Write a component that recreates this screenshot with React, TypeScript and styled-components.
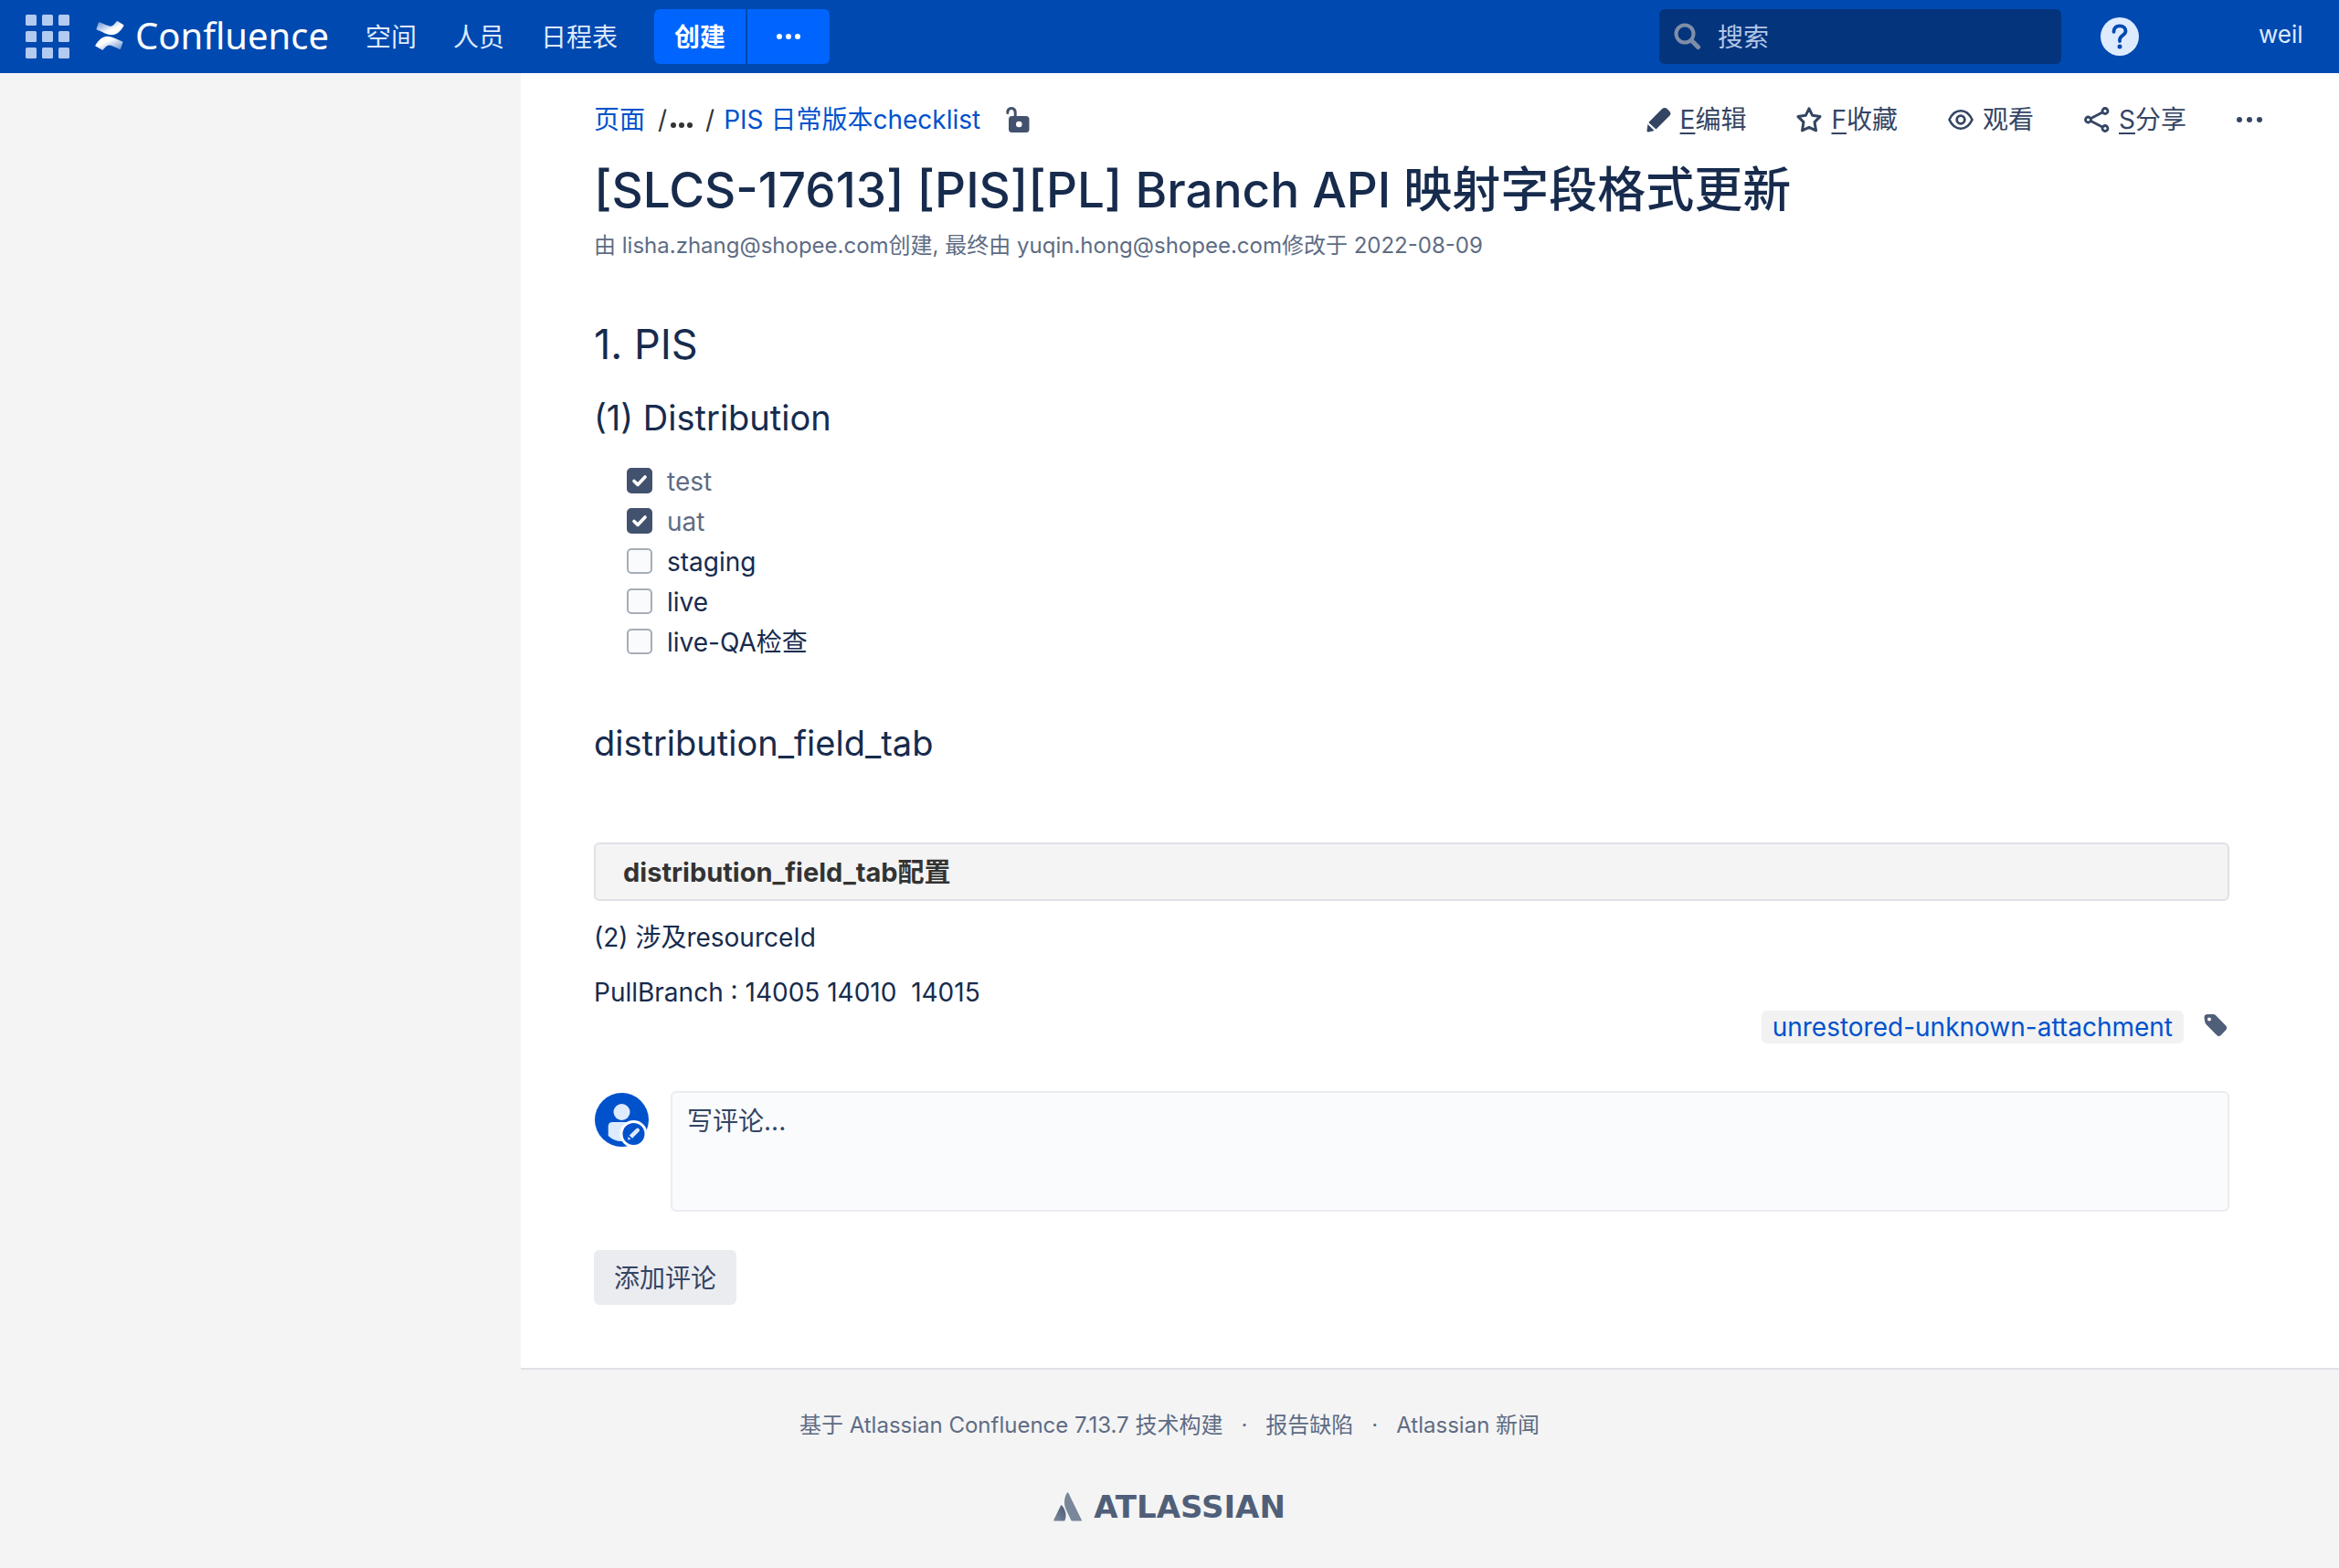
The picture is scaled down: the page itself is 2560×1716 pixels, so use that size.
import React from "react";
import styled, { createGlobalStyle } from "styled-components";

const GlobalStyle = createGlobalStyle`
  *, *::before, *::after { box-sizing: border-box; }
  body {
    margin: 0;
    background: #f4f4f4;
    color: #172b4d;
    font-family: Inter, "Noto Sans CJK SC", sans-serif;
    font-size: 28px;
    line-height: 40px;
  }
  button, input, textarea { font: inherit; color: inherit; }
  h1, h2, h3, p, ul { margin: 0; padding: 0; font-weight: 400; }
  ul { list-style: none; }
  a { color: inherit; text-decoration: none; }
  svg { display: block; flex: none; }
`;

const TopBar = styled.header`
  display: flex;
  align-items: center;
  height: 80px;
  padding: 0 40px 0 28px;
  background: #0049b0;
  color: #deebff;
`;

const PlainButton = styled.button`
  display: flex;
  align-items: center;
  padding: 0;
  border: 0;
  background: none;
  cursor: pointer;
`;

const Brand = styled.a`
  display: flex;
  align-items: center;
  gap: 11px;
  margin: 0 36px 0 28px;
  padding-bottom: 2px;
  color: #fff;
  font-family: "Noto Sans", sans-serif;
  font-size: 40px;
  line-height: 56px;
`;

const NavLinks = styled.nav`
  display: flex;
  gap: 40px;
  padding: 2px 0 0 4px;
`;

const SplitButton = styled.div`
  display: flex;
  gap: 2px;
  height: 60px;
  margin-left: 40px;
`;

const CreateButton = styled.button<{ $side: "left" | "right" }>`
  display: flex;
  align-items: center;
  justify-content: center;
  width: ${(p) => (p.$side === "left" ? 100 : 90)}px;
  padding: ${(p) => (p.$side === "left" ? "2px 0 0" : "0")};
  border: 0;
  border-radius: ${(p) => (p.$side === "left" ? "6px 0 0 6px" : "0 6px 6px 0")};
  background: #0065ff;
  color: #fff;
  font-weight: 700;
  cursor: pointer;
`;

const SearchBox = styled.label`
  display: flex;
  align-items: center;
  gap: 18px;
  width: 440px;
  height: 60px;
  margin-left: auto;
  padding: 0 16px;
  border-radius: 6px;
  background: #04347c;
`;

const SearchInput = styled.input`
  flex: 1;
  min-width: 0;
  padding: 2px 0 0;
  border: 0;
  outline: 0;
  background: none;
  &::placeholder { color: #b3c6e6; opacity: 1; }
`;

const HelpButton = styled(PlainButton)`
  margin: 0 131px 0 43px;
`;

const UserAvatar = styled.a`
  width: 48px;
  height: 48px;
  font-size: 26px;
  line-height: 44px;
  white-space: nowrap;
`;

const Main = styled.main`
  margin-left: 570px;
  padding: 31px 120px 69px 80px;
  border-bottom: 2px solid #dfe1e6;
  background: #fff;
`;

const Toolbar = styled.div`
  display: flex;
  align-items: center;
  justify-content: space-between;
  margin-right: -36px;
`;

const Breadcrumbs = styled.nav`
  display: flex;
  align-items: center;
  color: #333;
`;

const BlueLink = styled.a`
  color: #0052cc;
`;

const Separator = styled.span`
  padding: 0 10px 0 14px;
`;

const Ellipsis = styled(PlainButton)`
  margin-left: -6px;
  padding-top: 12px;
`;

const LockButton = styled(PlainButton)`
  margin-left: 28px;
`;

const Actions = styled.div`
  display: flex;
  align-items: center;
  gap: 55px;
  color: #344563;
`;

const Action = styled(PlainButton)`
  gap: 10px;
`;

const AccessKey = styled.span`
  text-decoration: underline;
  text-decoration-thickness: 2px;
  text-underline-offset: 4px;
`;

const PageTitle = styled.h1`
  margin-top: 25px;
  font-size: 53px;
  font-weight: 500;
  line-height: 64px;
`;

const Meta = styled.p`
  margin-top: 13px;
  color: #5e6c84;
  font-size: 24px;
  line-height: 32px;
`;

const SectionTitle = styled.h2`
  margin-top: 64px;
  font-size: 45px;
  line-height: 56px;
`;

const SubTitle = styled.h3<{ $top: number }>`
  margin-top: ${(p) => p.$top}px;
  font-size: 38px;
  line-height: 48px;
`;

const TaskList = styled.ul`
  margin-top: 24px;
  padding-left: 36px;
`;

const Task = styled.label<{ $done: boolean }>`
  display: flex;
  align-items: center;
  gap: 16px;
  height: 44px;
  color: ${(p) => (p.$done ? "#5e6c84" : "#172b4d")};
`;

const TickFrame = styled.span`
  display: grid;
  padding-bottom: 2px;
  > * { grid-area: 1 / 1; }
  > svg { pointer-events: none; }
`;

const TickBox = styled.input`
  appearance: none;
  width: 28px;
  height: 28px;
  margin: 0;
  border: 2px solid #a5adba;
  border-radius: 5px;
  background: #fafbfc;
  &:checked { border-color: #42526e; background: #42526e; }
  &:not(:checked) + svg { visibility: hidden; }
`;

const Panel = styled.div`
  margin-top: 85px;
  padding: 11px 30px 9px;
  border: 2px solid #dfe1e6;
  border-radius: 6px;
  background: #f4f4f4;
  color: #333;
  font-size: 29px;
  font-weight: 700;
`;

const Paragraph = styled.p`
  padding-top: 21px;
  line-height: 39px;
  white-space: pre-wrap;
`;

const Labels = styled.div`
  display: flex;
  align-items: center;
  justify-content: flex-end;
  gap: 20px;
`;

const Label = styled.a`
  padding: 0 12px;
  border-radius: 6px;
  background: #f2f2f2;
  color: #0052cc;
  line-height: 36px;
`;

const TagButton = styled(PlainButton)`
  padding-bottom: 4px;
`;

const CommentRow = styled.form`
  display: flex;
  align-items: flex-start;
  gap: 24px;
  margin-top: 52px;
`;

const CommentInput = styled.textarea`
  flex: 1;
  height: 132px;
  padding: 11px 16px;
  border: 2px solid #ebecf0;
  border-radius: 6px;
  outline: 0;
  background: #fafbfc;
  resize: none;
  &::placeholder { color: #344563; opacity: 1; }
`;

const AddComment = styled.button`
  height: 60px;
  margin-top: 42px;
  padding: 2px 22px 0;
  border: 0;
  border-radius: 6px;
  background: #ebecf0;
  color: #344563;
  cursor: pointer;
`;

const Footer = styled.footer`
  display: flex;
  flex-direction: column;
  align-items: center;
  gap: 45px;
  padding: 45px 0 42px;
  color: #5e6c84;
  font-size: 24px;
  line-height: 32px;
`;

const FooterLinks = styled.div`
  display: flex;
  gap: 20px;
`;

const AtlassianLogo = styled.a`
  display: flex;
  align-items: center;
  gap: 13px;
  color: #505f79;
  font-family: "DejaVu Sans", sans-serif;
  font-size: 34px;
  font-weight: 700;
  line-height: 56px;
`;

const GridIcon = () => (
  <svg width="48" height="48" viewBox="0 0 48 48" fill="#b3cbf0">
    {[0, 18, 36].map((y) =>
      [0, 18, 36].map((x) => <rect key={`${x}-${y}`} x={x} y={y} width="12" height="12" rx="1.5" />)
    )}
  </svg>
);

const ConfluenceMark = () => (
  <svg width="33" height="32" viewBox="0 0 33 32">
    <defs>
      <linearGradient id="cfTop" x1="0" y1="0" x2="0.6" y2="0.6">
        <stop offset="0" stopColor="#fff" stopOpacity="0.35" />
        <stop offset="1" stopColor="#fff" />
      </linearGradient>
      <linearGradient id="cfBottom" x1="1" y1="1" x2="0.4" y2="0.4">
        <stop offset="0" stopColor="#fff" stopOpacity="0.35" />
        <stop offset="1" stopColor="#fff" />
      </linearGradient>
    </defs>
    <path fill="url(#cfTop)" d="M5 1.2 12.600 4.600C16.800 6.500 19 6 21.400 3L23.800.3Q24.500 0 25 .3L31.200 4.200Q31.800 4.800 31.300 5.500C27.500 11.800 23.500 15.200 18.500 15.200 13 15.200 8 11.800 2 9.500Q1.300 9 1.600 8.300L4 1.500Q4.400 1 5 1.200Z" />
    <path fill="url(#cfBottom)" d="M27 31 19.500 27.500C15.500 25.600 13.200 26.300 11 29L8.700 31.500Q8.200 32 7.500 31.600L.6 27.500Q0 27 .4 26.400C4.500 20 8.500 16.500 14 16.700 19.500 17 24.500 20.300 30 22.500Q30.700 22.900 30.400 23.600L28 30.600Q27.600 31.200 27 31Z" />
  </svg>
);

const Dots = ({ color, size = 28 }: { color: string; size?: number }) => (
  <svg width={size} height="8" viewBox={`0 0 ${size} 8`} fill={color}>
    <circle cx="3" cy="4" r="3" />
    <circle cx={size / 2} cy="4" r="3" />
    <circle cx={size - 3} cy="4" r="3" />
  </svg>
);

const SearchIcon = () => (
  <svg width="30" height="30" viewBox="0 0 30 30" fill="none" stroke="#7f8ea8" strokeLinecap="round">
    <circle cx="12" cy="12" r="9.500" strokeWidth="4" />
    <path d="M20 20l6.500 6.500" strokeWidth="5" />
  </svg>
);

const HelpIcon = () => (
  <svg width="42" height="42" viewBox="0 0 42 42">
    <circle cx="21" cy="21" r="21" fill="#deebff" />
    <path d="M14.500 15.800C14.500 11.500 17.200 9.300 21 9.300s6.500 2.200 6.500 5.700c0 4.600-6.500 5-6.500 9.500v1.500" fill="none" stroke="#0049b0" strokeWidth="3.800" strokeLinecap="round" />
    <circle cx="21" cy="32" r="2.500" fill="#0049b0" />
  </svg>
);

const LockIcon = () => (
  <svg width="26" height="28" viewBox="0 0 26 28" fill="none">
    <path d="M1.800 6.500C1.800 3 3.500 1.500 6 1.500S10.200 3 10.200 6.500V12" stroke="#42526e" strokeWidth="3" strokeLinecap="round" />
    <path fillRule="evenodd" fill="#42526e" d="M6.500 10H22a3.500 3.500 0 0 1 3.500 3.500v11A3.500 3.500 0 0 1 22 28H6.500A3.500 3.500 0 0 1 3 24.500v-11A3.500 3.500 0 0 1 6.500 10ZM14.300 15.700a3.300 3.300 0 1 0 0 6.600 3.300 3.300 0 0 0 0-6.600Z" />
  </svg>
);

const PencilIcon = () => (
  <svg width="27" height="28" viewBox="0 0 27 28" fill="#344563">
    <path d="M2.300 17 17.500 1.800Q20 0 22.300 1.800L25.500 5Q27.300 7.300 25.500 9.500L10.500 24.500Z" />
    <path d="M1.500 19 8.600 26 2 27.400Q.3 27.500.5 25.800Z" />
  </svg>
);

const StarIcon = () => (
  <svg width="28" height="28" viewBox="0 0 28 28" fill="none" stroke="#344563" strokeWidth="3" strokeLinejoin="round">
    <path d="M14 1.800 17.700 9.300 26 10.600 20 16.600 21.500 25.800 14 22.300 6.500 25.800 8 16.600 2 10.600 10.300 9.300Z" />
  </svg>
);

const EyeIcon = () => (
  <svg width="28" height="24" viewBox="0 0 28 24" fill="none" stroke="#344563">
    <path strokeWidth="2.600" d="M1.500 12C4.500 5.500 9 2.300 14 2.300S23.500 5.500 26.500 12C23.500 18.500 19 21.700 14 21.700S4.500 18.500 1.500 12Z" />
    <circle cx="14" cy="12" r="4.300" strokeWidth="2.800" />
  </svg>
);

const ShareIcon = () => (
  <svg width="28" height="28" viewBox="0 0 28 28" fill="none" stroke="#344563" strokeWidth="2.800">
    <circle cx="4.500" cy="14" r="3" />
    <circle cx="23" cy="4.500" r="3" />
    <circle cx="23" cy="23.500" r="3" />
    <path d="M7.500 12.500 20 6M7.500 15.500 20 22" />
  </svg>
);

const TickIcon = () => (
  <svg width="28" height="28" viewBox="0 0 28 28" fill="none" stroke="#fff" strokeWidth="3.600" strokeLinecap="round" strokeLinejoin="round">
    <path d="M8 14.500 12 18.400 20 10" />
  </svg>
);

const TagIcon = () => (
  <svg width="30" height="30" viewBox="0 0 30 30">
    <path fillRule="evenodd" fill="#505f79" d="M6 3H12.500Q14 3 15.200 4.200L26.200 15.500Q28.300 18 26.200 20.200L20.700 26Q18.500 28 16.300 26L5 14.500Q3.500 13 3.300 11.500L2.500 6.500Q2.500 3 6 3ZM8 6.500a2 2 0 1 0 0 4 2 2 0 0 0 0-4Z" />
  </svg>
);

const AvatarIcon = () => (
  <svg width="60" height="64" viewBox="0 0 60 64">
    <circle cx="30.500" cy="31.500" r="29.500" fill="#0052cc" />
    <circle cx="30.500" cy="23" r="9" fill="#deebff" />
    <path d="M20.500 34H41Q45.500 34 45.500 39V49Q39 55 30.500 55T15.700 49V39Q15.700 34 20.500 34Z" fill="#deebff" />
    <circle cx="43.500" cy="47" r="15" fill="#fff" />
    <circle cx="43.500" cy="47" r="12" fill="#0052cc" />
    <path d="M38.800 48.500 46.300 41.200Q47.800 39.800 49.300 41.200 50.800 42.800 49.500 44.200L42 51.700ZM37.600 50 40.500 52.800 37.200 53.400Z" fill="#deebff" />
  </svg>
);

const AtlassianMark = () => (
  <svg width="31" height="32" viewBox="0 0 31 32">
    <defs>
      <linearGradient id="atShade" x1="0.9" y1="0.2" x2="0.2" y2="1">
        <stop offset="0" stopColor="#505f79" />
        <stop offset="1" stopColor="#7a869a" />
      </linearGradient>
    </defs>
    <path fill="url(#atShade)" d="M9 14.500Q8.500 14 8 14.800L.2 30.500Q0 31.500 .8 31.500H11.500Q12.200 31.500 12.500 31C14.500 26 13.500 19 9 14.500Z" />
    <path fill="#7a869a" d="M15 .6C10.800 7.500 11.500 14.500 14.200 20L19.300 30.800Q19.700 31.500 20.400 31.500H30.200Q31.200 31.500 30.800 30.500L16.300.7Q15.700 0 15 .6Z" />
  </svg>
);

const tasks = [
  { name: "test", done: true },
  { name: "uat", done: true },
  { name: "staging", done: false },
  { name: "live", done: false },
  { name: "live-QA检查", done: false },
];

const actions = [
  { icon: <PencilIcon />, accessKey: "E", text: "编辑" },
  { icon: <StarIcon />, accessKey: "F", text: "收藏" },
  { icon: <EyeIcon />, accessKey: "", text: "观看" },
  { icon: <ShareIcon />, accessKey: "S", text: "分享" },
];

export default function App() {
  return (
    <>
      <GlobalStyle />
      <TopBar>
        <PlainButton type="button" aria-label="应用"><GridIcon /></PlainButton>
        <Brand href="#"><ConfluenceMark />Confluence</Brand>
        <NavLinks>
          <a href="#">空间</a>
          <a href="#">人员</a>
          <a href="#">日程表</a>
        </NavLinks>
        <SplitButton>
          <CreateButton type="button" $side="left">创建</CreateButton>
          <CreateButton type="button" $side="right" aria-label="更多"><Dots color="#fff" size={26} /></CreateButton>
        </SplitButton>
        <SearchBox>
          <SearchIcon />
          <SearchInput type="search" placeholder="搜索" aria-label="搜索" />
        </SearchBox>
        <HelpButton type="button" aria-label="帮助"><HelpIcon /></HelpButton>
        <UserAvatar href="#">weil</UserAvatar>
      </TopBar>

      <Main>
        <Toolbar>
          <Breadcrumbs>
            <BlueLink href="#">页面</BlueLink>
            <Separator>/</Separator>
            <Ellipsis type="button" aria-label="展开"><Dots color="#333" size={24} /></Ellipsis>
            <Separator>/</Separator>
            <BlueLink href="#">PIS 日常版本checklist</BlueLink>
            <LockButton type="button" aria-label="限制"><LockIcon /></LockButton>
          </Breadcrumbs>
          <Actions>
            {actions.map((a) => (
              <Action key={a.text} type="button">
                {a.icon}
                <span>
                  {a.accessKey && <AccessKey>{a.accessKey}</AccessKey>}
                  {a.text}
                </span>
              </Action>
            ))}
            <Action type="button" aria-label="更多"><Dots color="#344563" size={28} /></Action>
          </Actions>
        </Toolbar>

        <PageTitle>[SLCS-17613] [PIS][PL] Branch API 映射字段格式更新</PageTitle>
        <Meta>
          由 <a href="#">lisha.zhang@shopee.com</a>创建, 最终由 <a href="#">yuqin.hong@shopee.com</a>修改于 <a href="#">2022-08-09</a>
        </Meta>

        <SectionTitle>1. PIS</SectionTitle>
        <SubTitle $top={28}>(1) Distribution</SubTitle>
        <TaskList>
          {tasks.map((t) => (
            <li key={t.name}>
              <Task $done={t.done}>
                <TickFrame>
                  <TickBox type="checkbox" defaultChecked={t.done} />
                  <TickIcon />
                </TickFrame>
                {t.name}
              </Task>
            </li>
          ))}
        </TaskList>
        <SubTitle $top={64}>distribution_field_tab</SubTitle>
        <Panel>distribution_field_tab配置</Panel>
        <Paragraph>(2) 涉及resourceId</Paragraph>
        <Paragraph>{"PullBranch : 14005 14010  14015"}</Paragraph>

        <Labels>
          <Label href="#">unrestored-unknown-attachment</Label>
          <TagButton type="button" aria-label="编辑标签"><TagIcon /></TagButton>
        </Labels>

        <CommentRow>
          <AvatarIcon />
          <CommentInput placeholder="写评论..." aria-label="写评论" />
        </CommentRow>
        <AddComment type="button">添加评论</AddComment>
      </Main>

      <Footer>
        <FooterLinks>
          <span>基于 <a href="#">Atlassian Confluence</a> 7.13.7 技术构建</span>
          <span>·</span>
          <a href="#">报告缺陷</a>
          <span>·</span>
          <a href="#">Atlassian 新闻</a>
        </FooterLinks>
        <AtlassianLogo href="#"><AtlassianMark />ATLASSIAN</AtlassianLogo>
      </Footer>
    </>
  );
}
